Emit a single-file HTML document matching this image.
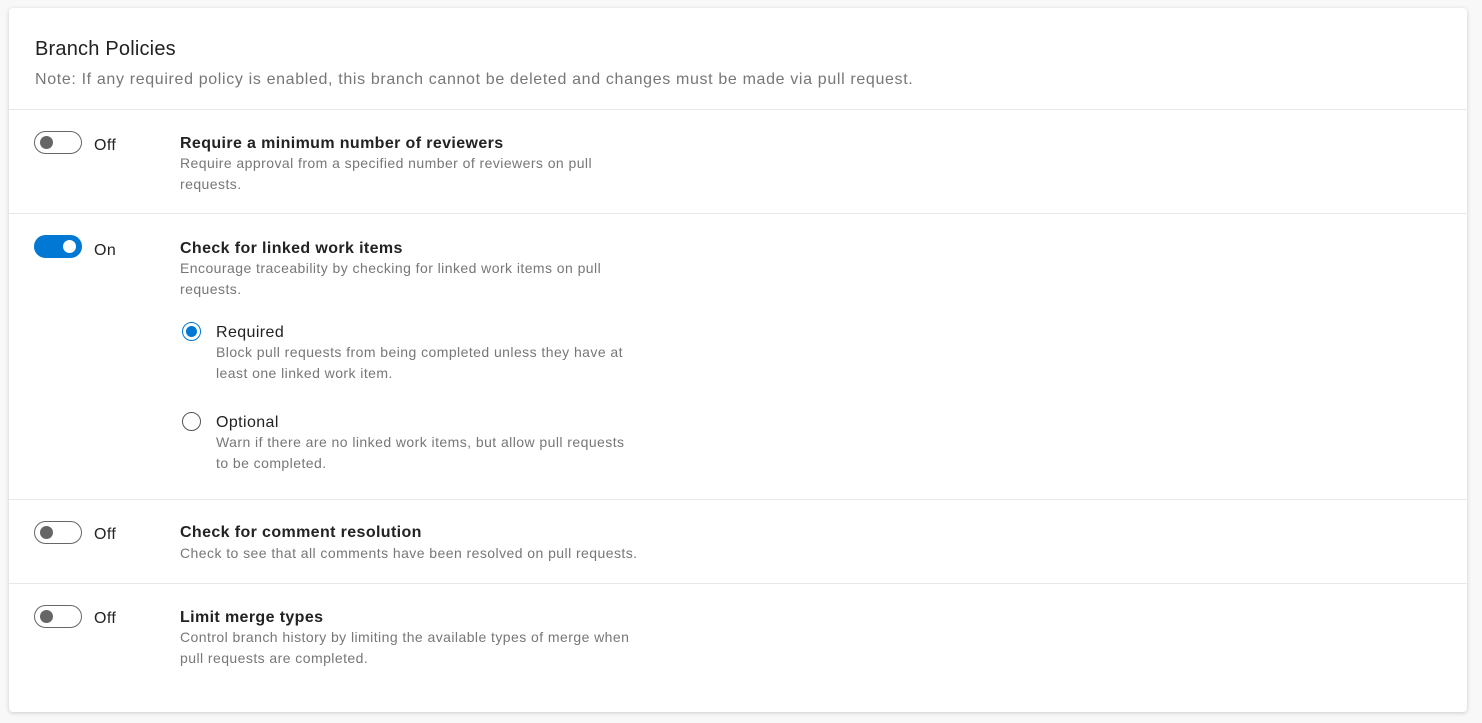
<!DOCTYPE html>
<html><head><style>
body{margin:0;background:#f8f8f8;font-family:"Segoe UI","Liberation Sans",sans-serif;width:1482px;height:723px;overflow:hidden;position:relative}
.card{position:absolute;left:9px;top:8px;width:1458px;height:704px;background:#fff;border-radius:4px;box-shadow:0 1px 4px rgba(0,0,0,.18)}
.a{position:absolute;white-space:nowrap}
.hr{position:absolute;left:9px;width:1458px;height:1px;background:#e8e8e8}
.t{font-size:16px;font-weight:bold;color:#222;line-height:20px;letter-spacing:0.38px;margin-top:1px}
.d{font-size:14px;color:#777;line-height:20.5px;letter-spacing:0.44px}
.lab{font-size:16px;color:#222;line-height:20px;letter-spacing:0.4px;margin-top:2px}
.tg{position:absolute;left:34px;width:46px;height:21px;border:1.5px solid #666;border-radius:12px}
.tg::after{content:"";position:absolute;left:5px;top:4px;width:13px;height:13px;border-radius:50%;background:#666}
.on{background:#0078d4;border-color:#0078d4}
.on::after{left:auto;right:5px;background:#fff}
.r{position:absolute;left:182px;width:17px;height:17px;border:1.5px solid #555;border-radius:50%}
.rs{border-color:#0078d4}
.rs::after{content:"";position:absolute;left:3px;top:3px;width:11px;height:11px;border-radius:50%;background:#0078d4}
</style></head><body>
<div class="card"></div>
<div class="a" style="left:35px;top:38px;font-size:20px;color:#222;letter-spacing:0.2px">Branch Policies</div>
<div class="a" style="left:35px;top:71px;font-size:16px;color:#777;letter-spacing:0.65px">Note: If any required policy is enabled, this branch cannot be deleted and changes must be made via pull request.</div>
<div class="hr" style="top:109px"></div>

<div class="tg" style="top:131px"></div><div class="a lab" style="left:94px;top:134px">Off</div>
<div class="a t" style="left:180px;top:133px">Require a minimum number of reviewers</div>
<div class="a d" style="left:180px;top:153px">Require approval from a specified number of reviewers on pull<br>requests.</div>
<div class="hr" style="top:213px"></div>

<div class="tg on" style="top:235px"></div><div class="a lab" style="left:94px;top:239px">On</div>
<div class="a t" style="left:180px;top:238px">Check for linked work items</div>
<div class="a d" style="left:180px;top:258px">Encourage traceability by checking for linked work items on pull<br>requests.</div>
<div class="r rs" style="top:322px"></div>
<div class="a lab" style="left:216px;top:321px">Required</div>
<div class="a d" style="left:216px;top:342px">Block pull requests from being completed unless they have at<br>least one linked work item.</div>
<div class="r" style="top:412px"></div>
<div class="a lab" style="left:216px;top:411px">Optional</div>
<div class="a d" style="left:216px;top:432px">Warn if there are no linked work items, but allow pull requests<br>to be completed.</div>
<div class="hr" style="top:499px"></div>

<div class="tg" style="top:521px"></div><div class="a lab" style="left:94px;top:523px">Off</div>
<div class="a t" style="left:180px;top:522px">Check for comment resolution</div>
<div class="a d" style="left:180px;top:543px">Check to see that all comments have been resolved on pull requests.</div>
<div class="hr" style="top:583px"></div>

<div class="tg" style="top:605px"></div><div class="a lab" style="left:94px;top:607px">Off</div>
<div class="a t" style="left:180px;top:607px">Limit merge types</div>
<div class="a d" style="left:180px;top:627px">Control branch history by limiting the available types of merge when<br>pull requests are completed.</div>
</body></html>
